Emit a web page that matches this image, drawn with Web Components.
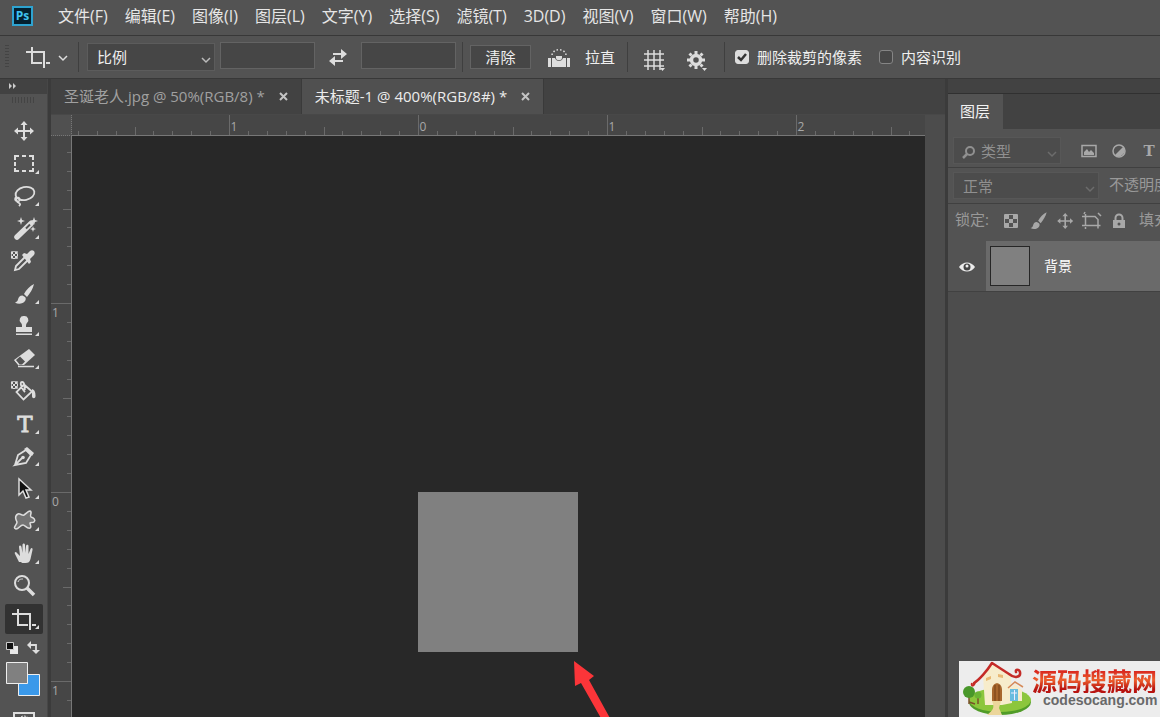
<!DOCTYPE html>
<html lang="zh-CN">
<head>
<meta charset="utf-8">
<title>Photoshop</title>
<style>
html,body{margin:0;height:100%;overflow:hidden;background:#535353}
body{font-family:"Open Sans","Noto Sans CJK SC",sans-serif;font-size:15px;line-height:20px;color:#e6e6e6}
ps-app{--bar:#535353;--well:#424242;--edge:#383838;--field:#464646;--ink:#dddddd}
</style>
</head>
<body>
<ps-app></ps-app>
<script>
const define = (name, html, setup) => customElements.define(name, class extends HTMLElement {
  connectedCallback() {
    if (this.shadowRoot) return;
    this.attachShadow({ mode: 'open' }).innerHTML = typeof html === 'function' ? html(this) : html;
    if (setup) setup(this);
  }
});

const S = 'fill="none" stroke="currentColor"';
const checker = '<g fill="currentColor"><path d="M6 6h2v2H6zM10 6h2v2h-2zM8 8h2v2H8zM12 8h1v2h-1zM6 10h2v2H6zM10 10h2v2h-2zM8 12h2v1H8z"/></g><path d="M6.500 5.500h6v7h-6z" fill="none" stroke="currentColor" stroke-width=".7"/>';
const moveShape = '<path d="M11 15h16M19 7v16" fill="none" stroke="currentColor" stroke-width="2"/><path fill="currentColor" d="M9 15l4-3.500v7zM29 15l-4-3.500v7zM19 5l-3.500 4h7zM19 25l-3.500-4h7z"/>';
const brushShape = '<path fill="currentColor" d="M29 5c-4 2-8 6-10 10l3 3c3-4 6-8 7-13zM17.500 16.500c-3 0-4 2-4.500 4-.5 2-1.500 2.500-3 3 3 2 8 1.500 10-1.500 1-1.500 1-3 0-4z"/>';
const cropShape = '<path d="M7 10h18v16M13 5v16h10M27 21h4" fill="none" stroke="currentColor" stroke-width="2"/>';
const icons = {
  move: moveShape,
  marquee: `<path ${S} stroke-width="2" d="M10 11V7h4M17 7h4M24 7h4v4M28 13v4M28 19v3h-4M21 22h-4M14 22h-4v-3M10 17v-4"/>`,
  lasso: `<g ${S} stroke-width="1.800"><ellipse cx="20" cy="12.500" rx="9.500" ry="6.500" transform="rotate(-12 20 12.500)"/><path d="M11 16c-2 3 0 5 3 4 2-1 0-4-2-3s0 4 2 5 1 2 0 3"/></g>`,
  wand: '<path d="M12 23L26 9.500" stroke="currentColor" stroke-width="5.500" stroke-linecap="round"/><path d="M21 14.500l4-4" stroke="#535353" stroke-width="2"/><path fill="currentColor" d="M16 3l1 3 3 1-3 1-1 3-1-3-3-1 3-1zM29 3l1 3 3 1-3 1-1 3-1-3-3-1 3-1zM28 12l.8 2.200 2.200.8-2.200.8-.8 2.200-.8-2.200-2.200-.8 2.200-.8z"/>',
  dropper: checker + `<path ${S} stroke-width="1.800" d="M20 11l-9 9-1 4 4-1 9-9"/><path fill="currentColor" d="M17 9l2-2 3 1 3-3c3-2 6 1 4 4l-4 4 1 3-2 2z"/>`,
  brush: brushShape,
  stamp: '<path fill="currentColor" d="M19 5a4 4 0 0 1 3 7c-1 1-1 2-1 4h6v5H11v-5h6c0-2 0-3-1-4a4 4 0 0 1 3-7zM11 22.500h16v1.500H11z"/>',
  eraser: `<path fill="currentColor" d="M24 5l6 6-11 10h-5l-5-5z"/><path d="M15 12.500l5 5-3 3h-3l-3.500-4z" fill="#535353"/><path ${S} stroke-width="1.500" d="M10 16l4 5M13 22.500h16"/>`,
  bucket: checker + `<path ${S} stroke-width="1.800" d="M19 8.500l8 7-8.500 8-7-7.500zM20 16c-3-3-6-10-3-10s2 3 3 8"/><path fill="currentColor" d="M27 13c3 1 3.500 4 3.500 7 0 3-3.500 3-3.500 0z"/>`,
  type: '<text x="20" y="23" text-anchor="middle" font-family="DejaVu Serif" font-size="23" fill="currentColor" stroke="currentColor" stroke-width=".8">T</text>',
  pen: `<path ${S} stroke-width="1.800" d="M10 24l3-10 8-5 5 5-5 8-11 2 7-7"/><circle cx="18" cy="16.500" r="1.800" fill="currentColor"/><path fill="currentColor" d="M22 6l7 6-2 3-8-7z"/>`,
  arrow: '<path d="M14 5v16l4-4 3 7 3-1-3-7h5z" fill="#111" stroke="currentColor" stroke-width="1.500"/>',
  shape: '<path d="M13 8c2-1 4 2 6 1s4-4 6-4c3 1-1 5 1 6 3 1 5 3 3 5-1 1-4 0-4 1 0 2 2 4 0 5-3 1-5-3-7-3-3 0-4 4-7 4-4-1 1-4 1-7-1-2-3-6 1-8z" fill="#737373" stroke="currentColor" stroke-width="1.500"/>',
  hand: '<path fill="currentColor" d="M14 23l-4-8c-1-2 1-3 2-1l3 3-1-9c0-2 2-2 2.500 0l1 6V6c0-2 2.500-2 2.500 0v8l1-7c.5-2 2.500-1.500 2.500 0v8l2-5c1-2 2.500-1 2 1l-2 9c-1 3-2 4-5 4s-4 0-4.500-1z"/>',
  zoom: `<g ${S}><circle cx="17" cy="12" r="7" stroke-width="2"/><path d="M13 11c1-3 3-3 5-3" stroke-width="1"/><path d="M22 17l7 7" stroke-width="3.500"/></g>`,
  crop: cropShape,
  swap: `<g ${S} stroke-width="2"><path d="M14 12h11M13 19h11"/></g><path fill="currentColor" d="M22 7l6 5-6 5zM16 14l-6 5 6 5z"/>`,
  level: '<path fill="currentColor" d="M8 16h3v9H8zM12 16h3c1 4 7 4 8 0h3v9H12zM27 16h3v9h-3zM16 14h6v2c0 3-6 3-6 0z"/><path d="M12 13c1-7 13-7 14 0" fill="none" stroke="currentColor" stroke-width="1.500" stroke-dasharray="1.500 2"/>',
  grid: `<path ${S} stroke-width="1.500" d="M12 8v20M18 8v20M24 8v20M8 12h20M8 18h20M8 24h20"/><path fill="currentColor" d="M24 26h5l-2.500 3z"/>`,
  gear: `<circle ${S} cx="16" cy="18" r="4.500" stroke-width="3.500"/><path ${S} stroke-width="3" d="M16 9v3M16 24v3M7 18h3M22 18h3M9.500 11.500l2 2M20.500 22.500l2 2M22.500 11.500l-2 2M11.500 22.500l-2 2"/><path fill="currentColor" d="M22 26h5l-2.500 3z"/>`,
  chevron: `<path ${S} stroke-width="1.500" d="M15 14l4 4 4-4"/>`,
  search: `<circle ${S} cx="20" cy="13" r="4" stroke-width="2"/><path ${S} stroke-width="2.500" d="M17 16l-4 4"/>`,
  image: `<path ${S} stroke-width="1.500" d="M12 9.500h14v11H12z"/><path fill="currentColor" d="M14 19v-3l3-3 2 3 2-2 3 3v2z"/>`,
  adjust: `<circle ${S} cx="19" cy="15" r="6" stroke-width="1.500"/><path fill="currentColor" d="M23.500 10.500a6.500 6.500 0 0 1-9 9z"/>`,
  smallType: '<text x="19" y="20" text-anchor="middle" font-family="DejaVu Serif" font-weight="bold" font-size="15" fill="currentColor">T</text>',
  checks: `<path ${S} d="M12.500 8.500h13v13h-13z"/><path fill="currentColor" d="M13 9h4v4h-4zM21 9h4v4h-4zM17 13h4v4h-4zM13 17h4v4h-4zM21 17h4v4h-4z"/>`,
  smallBrush: `<g transform="translate(3 2) scale(.85)">${brushShape}</g>`,
  smallMove: `<g transform="translate(4 3) scale(.8)">${moveShape}</g>`,
  artboard: `<path ${S} stroke-width="1.500" d="M9 10.500h13l3 3v9M12.500 8v11.500h15M9 19.500h3M12 6l-1 2M12.500 21v2M25 7l3 3"/>`,
  lock: `<path fill="currentColor" d="M13 14h12v8H13z"/><path ${S} stroke-width="2" d="M15.500 14v-2a3.500 3.500 0 0 1 7 0v2"/><circle cx="19" cy="18" r="1.500" fill="#535353"/>`,
  eye: '<path fill="currentColor" d="M11 16c4-6 12-6 16 0-4 6-12 6-16 0z"/><circle cx="19" cy="16" r="3.500" fill="#444"/><circle cx="19" cy="15" r="1.500" fill="currentColor"/>'
};

define('ps-icon', el => `<style>:host{display:block;flex:none;width:38px;height:30px}svg{display:block}</style>
<svg width="38" height="30" viewBox="0 0 38 30" aria-hidden="true">${icons[el.getAttribute('name')]}${el.hasAttribute('more') ? '<path fill="currentColor" d="M34 21v4h-4z"/>' : ''}</svg>`);

define('ps-menu-bar', () => `<style>
:host{display:flex;align-items:center;height:35px;padding:0 12px;border-bottom:1px solid var(--edge);background:var(--bar)}
nav{display:flex;gap:17px;padding-left:25px;padding-bottom:3px}
a{color:inherit;text-decoration:none;font-size:16px;line-height:24px;white-space:nowrap}
.logo{box-sizing:border-box;width:21px;height:20px;border:2px solid #2ea3d0;background:#04202f;color:#3fc3f2;font:bold 12px/16px "Open Sans",sans-serif;text-align:center;margin-bottom:3px}
</style><div class="logo">Ps</div><nav>${['文件(F)','编辑(E)','图像(I)','图层(L)','文字(Y)','选择(S)','滤镜(T)','3D(D)','视图(V)','窗口(W)','帮助(H)'].map(t => `<a href="#">${t}</a>`).join('')}</nav>`);

define('ps-select', el => `<style>
:host{display:grid;flex:none;align-items:center;background:var(--field);border:1px solid #5c5c5c;box-sizing:border-box}
select{grid-area:1/1;appearance:none;box-sizing:border-box;width:100%;height:100%;border:0;background:none;color:inherit;font:inherit;line-height:20px;padding:0 24px 4px var(--inset,9px)}
ps-icon{grid-area:1/1;justify-self:end;margin-right:-11px;pointer-events:none;color:var(--chevron,#bbb)}
slot{display:block;grid-area:1/1;justify-self:start;pointer-events:none}
</style><select aria-label="${el.getAttribute('label')}"><option>${el.getAttribute('value')}</option></select><slot></slot><ps-icon name="chevron"></ps-icon>`);

define('ps-check', el => `<style>
:host{display:block;flex:none}
label{display:flex;align-items:center;gap:8px}
input{appearance:none;margin:0;width:14px;height:14px;border:1px solid #858585;border-radius:3px;background:#484848}
input:checked{background:#ddd;border-color:#ddd}
span{display:grid}span>*{grid-area:1/1}
svg{display:none;pointer-events:none}input:checked+svg{display:block}
</style><label><span><input type="checkbox" ${el.hasAttribute('checked') ? 'checked' : ''}><svg width="14" height="14"><path d="M3 7l3 3 5-6" fill="none" stroke="#333" stroke-width="2.500"/></svg></span><slot></slot></label>`);

define('ps-options-bar', `<style>
:host{display:flex;align-items:center;height:42px;border-bottom:1px solid var(--edge);background:var(--bar);color:#efefef}
.grip{width:4px;height:24px;margin:0 10px 0 5px;background:repeating-linear-gradient(#444 0 1px,transparent 1px 3px)}
.sep{width:1px;height:30px;background:#3f3f3f;flex:none}
.chev{margin:0 -4px 0 -13px}
ps-select{width:128px;height:28px;margin:0 5px 0 8px}
input{box-sizing:border-box;width:95px;height:27px;border:1px solid #636363;background:var(--field);color:inherit;margin-bottom:4px}
button{font:inherit;color:inherit;padding:0;border:1px solid #636363;background:var(--field)}
.clear{width:61px;height:24px;margin:0 9px 0 7px;line-height:20px}
.tool{border:0;background:none;display:block}
.plain{margin:0 12px 0 7px}
ps-icon{color:#ddd}
</style>
<div class="grip"></div><ps-icon name="crop"></ps-icon><ps-icon class="chev" name="chevron"></ps-icon><div class="sep"></div>
<ps-select label="裁剪比例" value="比例"></ps-select>
<input aria-label="宽度"><button class="tool" aria-label="互换" style="margin:0 4px"><ps-icon name="swap"></ps-icon></button><input aria-label="高度">
<div class="sep" style="margin-left:6px"></div><button class="clear">清除</button>
<ps-icon name="level"></ps-icon><span class="plain">拉直</span><div class="sep"></div>
<button class="tool" aria-label="叠加" style="margin-left:8px"><ps-icon name="grid"></ps-icon></button>
<button class="tool" aria-label="设置" style="margin-left:6px"><ps-icon name="gear"></ps-icon></button>
<div class="sep" style="margin:0 10px 0 6px"></div>
<ps-check checked>删除裁剪的像素</ps-check><ps-check style="margin-left:17px">内容识别</ps-check>`);

define('ps-toolbar', () => `<style>
:host{display:flex;flex-direction:column;width:47px;background:var(--bar);border-right:1px solid #474747;color:var(--ink);overflow:hidden}
header{height:15px;flex:none;background:var(--well)}header svg{display:block}
.grip{height:6px;flex:none;margin:3px 12px 12px;background:repeating-linear-gradient(90deg,#444 0 1px,transparent 1px 3px)}
.tools{display:grid;grid-template-rows:repeat(16,1fr);height:520px;flex:none;justify-content:center}
button{border:0;padding:0;background:none;color:inherit;display:block;align-self:center;border-radius:2px}
button[aria-pressed=true]{background:#323232}
.colours{margin:5px 0 0 5px;flex:none;display:block}
</style><header><svg width="20" height="14"><path fill="#ccc" d="M9 4l3 3-3 3zM13 4l3 3-3 3z"/></svg></header><div class="grip"></div>
<div class="tools">${[['move','移动',0],['marquee','选框',1],['lasso','套索',1],['wand','魔棒',1],['dropper','吸管',0],['brush','画笔',1],['stamp','图章',1],['eraser','橡皮擦',1],['bucket','油漆桶',0],['type','文字',1],['pen','钢笔',1],['arrow','路径选择',1],['shape','形状',1],['hand','抓手',1],['zoom','缩放',0],['crop','裁剪',1]].map(([n,l,m],i) => `<button aria-label="${l}" aria-pressed="${i === 15}"><ps-icon name="${n}" ${m ? 'more' : ''}></ps-icon></button>`).join('')}</div>
<svg class="colours" width="38" height="78" viewBox="0 0 38 78"><path fill="#e8e8e8" d="M5 6h8v8H5z"/><path fill="#111" stroke="#ccc" d="M1.500 2.500h7v7h-7z"/><path d="M25 5h6v7" fill="none" stroke="#ddd" stroke-width="1.800"/><path fill="#ddd" d="M22 5l4-4v8zM31 14l-4-4h8z"/>
<path fill="#3a99ea" stroke="#eee" d="M13.500 34.500h21v21h-21z"/><path fill="#808080" stroke="#eee" d="M1.500 22.500h21v21h-21z"/><path d="M9 78v-5h20v5" fill="none" stroke="#ddd" stroke-width="2"/><path d="M14 79c2-4 8-4 10 0" fill="none" stroke="#ddd" stroke-dasharray="2 1"/></svg>`);

define('ps-tab', `<style>
:host{display:flex;align-items:center;gap:14px;padding:0 12px 0 13px;color:#a0a0a0;border-right:1px solid #3a3a3a;white-space:nowrap}
:host([active]){background:#505050;color:#ececec}
button{border:0;padding:0;background:none;color:#c4c4c4;width:10px;height:10px}svg{display:block}
span{padding-bottom:2px}
</style><span><slot></slot></span><button aria-label="关闭"><svg width="10" height="10"><path d="M1 1l7 7M8 1L1 8" stroke="currentColor" stroke-width="2"/></svg></button>`);

define('ps-ruler', `<style>:host{display:block;overflow:hidden;background:#464646;min-width:0;min-height:0;contain:size}
svg{display:block;width:100%;height:100%}path{stroke:#6a6a6a}text{fill:#a8a8a8;font-size:12px}</style><svg></svg>`, el => {
  const vertical = el.hasAttribute('vertical'), origin = vertical ? 356 : 346, unit = 189;
  const draw = () => {
    const size = vertical ? el.clientHeight : el.clientWidth;
    let out = '';
    for (let i = -60; i <= 200; i++) {
      const p = Math.round(origin + i * unit / 10) + .5, len = i % 10 === 0 ? 20 : i % 5 === 0 ? 8 : 4;
      if (p < 0 || p > size) continue;
      out += vertical ? `<path d="M${20 - len} ${p}h${len}"/>` : `<path d="M${p} ${20 - len}v${len}"/>`;
      if (i % 10 === 0 && p + 16 < size) out += vertical ? `<text x="1" y="${p + 13}">${Math.abs(i / 10)}</text>` : `<text x="${p + 1}" y="16">${Math.abs(i / 10)}</text>`;
    }
    el.shadowRoot.querySelector('svg').innerHTML = out;
  };
  draw();
  new ResizeObserver(draw).observe(el);
});

define('ps-document', `<style>
:host{display:grid;grid-template:36px 21px 1fr/21px 1fr 20px;min-width:0;background:#4a4a4a}
.tabs{grid-column:1/-1;display:flex;background:var(--well);border-bottom:1px solid #484848}
.corner{background:#505050;border-right:1px dotted #777;border-bottom:1px dotted #777}
.h{border-bottom:1px solid #777}.v{border-right:1px solid #777}
.space{position:relative;background:#282828;overflow:hidden}
.paper{position:absolute;left:346px;top:356px;width:160px;height:160px;background:#808080}
.space svg{position:absolute;left:500px;top:520px}
.strip{background:#4c4c4c}
</style>
<div class="tabs"><ps-tab>圣诞老人.jpg @ 50%(RGB/8) *</ps-tab><ps-tab active>未标题-1 @ 400%(RGB/8#) *</ps-tab></div>
<div class="corner"></div><ps-ruler class="h"></ps-ruler><div class="strip"></div>
<ps-ruler vertical class="v"></ps-ruler><div class="space"><div class="paper"></div><svg width="44" height="64"><path fill="#fb3539" d="M2 5l20 15-5 4 22 40h-9L9 27l-6 3z"/></svg></div><div class="strip"></div>`);

define('ps-layers-panel', `<style>
:host{display:flex;flex-direction:column;background:#4d4d4d;overflow:hidden;color:#999;--chevron:#6c6c6c}
.top{height:14px;background:var(--well);border-bottom:1px solid #303030}
.tabs{height:35px;background:var(--well);display:flex}
.tabs button{border:0;padding:0 13px 2px 12px;background:var(--bar);color:#f2f2f2;font:inherit}
.row{display:flex;align-items:center;background:var(--bar);border-bottom:1px solid #404040;padding-left:5px;white-space:nowrap;box-sizing:border-box;overflow:hidden}
.filter{height:39px;padding-top:5px}.blend{height:36px}.lock{height:37px;border:0}
ps-select{background:#4c4c4c;border-color:#575757;height:27px;color:#909090}
.filter ps-select{width:108px;--inset:27px;margin-right:9px}
.filter ps-select>ps-icon{margin-left:-4px}
.filter>ps-icon{margin-right:-8px;color:#a8a8a8}
.blend ps-select{width:146px;margin-right:10px}
.blend span{padding-bottom:4px}
.lock{padding:0 0 4px 7px}
.icons{display:flex;padding-left:2px}
.icons ps-icon{margin-right:-11px;color:#a8a8a8}
.lock span{padding-bottom:4px}
.lock span:last-child{margin-left:12px}
.icons{padding-left:3px}
.layer{display:flex;height:50px;border-bottom:1px solid #414141}
.eye{width:38px;border:0;padding:0;background:var(--bar);color:#ececec}
.item{flex:1;display:flex;align-items:center;gap:14px;padding-left:4px;background:#6a6a6a;color:#fff;font-size:14px}
.thumb{width:38px;height:38px;border:1px solid #262626;background:#808080}
</style>
<div class="top"></div><div class="tabs"><button>图层</button></div>
<div class="row filter"><ps-select label="过滤" value="类型"><ps-icon name="search"></ps-icon></ps-select><ps-icon name="image"></ps-icon><ps-icon name="adjust"></ps-icon><ps-icon name="smallType"></ps-icon></div>
<div class="row blend"><ps-select label="混合模式" value="正常"></ps-select><span>不透明度:</span></div>
<div class="row lock"><span>锁定:</span><div class="icons"><ps-icon name="checks"></ps-icon><ps-icon name="smallBrush"></ps-icon><ps-icon name="smallMove"></ps-icon><ps-icon name="artboard"></ps-icon><ps-icon name="lock"></ps-icon></div><span>填充:</span></div>
<div class="layer"><button class="eye" aria-label="可见性"><ps-icon name="eye"></ps-icon></button><div class="item"><div class="thumb"></div><span>背景</span></div></div>`);

define('site-badge', `<style>
:host{display:flex;position:absolute;right:0;bottom:0;width:201px;height:56px;background:#ededed;overflow:hidden}
svg{flex:none}
.name{display:flex;flex-direction:column}
b{font:bold 25px/26px "Noto Sans CJK SC",sans-serif;margin-top:6px;background:linear-gradient(#d8261f 15%,#ee5f2d 50%,#b81410 85%);background-clip:text;-webkit-background-clip:text;color:transparent;white-space:nowrap}
span{font:bold 14px/14px "Liberation Sans",sans-serif;color:#696969;padding-left:11px}
</style>
<svg width="73" height="56" viewBox="0 0 73 56"><ellipse cx="41" cy="41" rx="31" ry="13" fill="#519c28"/><ellipse cx="41" cy="39" rx="31" ry="12" fill="#8cc63c"/>
<path d="M33 3l19 12 1 27-10 2H26l-2-29z" fill="#f7eccb"/><path d="M33 40h9l-2 7 3 7H28c6-5 8-7 5-14z" fill="#ecd69b"/>
<path d="M15 22c5-3 13-12 18-20l17 11c6 5 12 3 11-2-1-3-5-3-4 0" fill="none" stroke="#c42b27" stroke-width="2.500" stroke-linecap="round" stroke-linejoin="round"/><path d="M16 22c-2 4-4 3-3 0" fill="none" stroke="#c42b27" stroke-width="2"/>
<path d="M33 40V29c0-9 10-9 10 0v11z" fill="#a8672d"/><path d="M36 24v16M40 24v16" stroke="#754017"/>
<path fill="#e8b873" d="M27 17l5-2v3l-5 2zM39 13l5 1v3l-5-1z"/><path fill="#f7eccb" d="M50 29l6-6 7 6v11H50z"/><path d="M49 27l7-6 8 5" fill="none" stroke="#d58a58" stroke-width="1.500"/><path fill="#69bcdf" d="M51 28h8v12h-8z"/><path d="M52 32h6M55.500 29v10" stroke="#eef"/>
<path d="M10 34v9M19 37v6M10 41l6 2" stroke="#795129" stroke-width="1.500"/><circle cx="10" cy="31" r="6" fill="#49972a"/><circle cx="19" cy="34" r="3.500" fill="#6bb434"/></svg>
<div class="name"><b>源码搜藏网</b><span>codesocang.com</span></div>`);

define('ps-app', `<style>
:host{display:flex;flex-direction:column;height:100vh;position:relative;overflow:hidden}
main{flex:1;min-height:0;display:grid;grid-template:minmax(0,1fr)/48px 1fr 212px;gap:3px;background:#3b3b3b}
</style><ps-menu-bar></ps-menu-bar><ps-options-bar></ps-options-bar>
<main><ps-toolbar></ps-toolbar><ps-document></ps-document><ps-layers-panel></ps-layers-panel></main><site-badge></site-badge>`);
</script>
</body>
</html>
